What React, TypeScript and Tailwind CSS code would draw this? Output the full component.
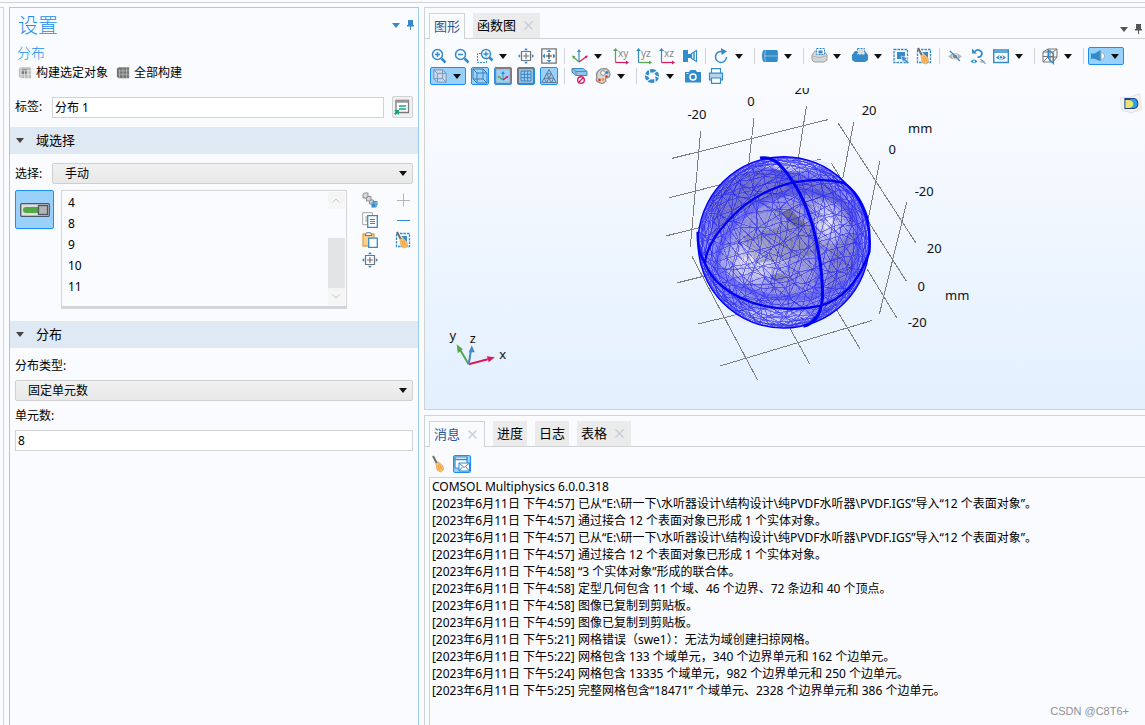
import { useState, type ReactNode } from "react";

const BLUE = "#338bca";
const RED = "#d81b60";
const GREEN = "#57a64a";
const GRAY = "#747474";

// ── Icons ───────────────────────────────────────────────────────────────

function Svg({ children, size = 16 }: { children: ReactNode; size?: number }) {
  return (
    <svg width={size} height={size} viewBox="0 0 16 16" fill="none" className="shrink-0 overflow-visible" aria-hidden="true">
      {children}
    </svg>
  );
}

function Caret({ color = "#111" }: { color?: string }) {
  return (
    <svg width="8" height="5" viewBox="0 0 8 5" className="shrink-0" aria-hidden="true">
      <path d="M0 0h8L4 5z" fill={color} />
    </svg>
  );
}

function Cross() {
  return (
    <svg width="9" height="9" viewBox="0 0 9 9" aria-hidden="true">
      <path d="M.5.5l8 8M8.500.5l-8 8" stroke="#c5ced8" strokeWidth="1.3" />
    </svg>
  );
}

function Pin({ color }: { color: string }) {
  return (
    <svg width="7" height="10" viewBox="0 0 7 10" className="shrink-0" aria-hidden="true">
      <path d="M1 0h5v5h1v1.500H4V10H3V6.500H0V5h1z" fill={color} />
    </svg>
  );
}

const Broom = () => (
  <>
    <path d="M2 0l4 7.500" stroke="#6d6d6d" strokeWidth="2" />
    <path d="M5 7.500l2.500-1.500 4.500 4 .5 4-3 2-3.500-2z" fill="#fbbf6b" stroke="#e8953b" strokeWidth=".6" />
    <path d="M7 9l1.500 5M8.500 8.500l2.500 5" stroke="#e8953b" strokeWidth=".8" />
  </>
);

const ICONS: Record<string, ReactNode> = {
  zoomIn: (
    <g stroke={BLUE}>
      <circle cx="6.500" cy="6.500" r="5" strokeWidth="1.500" />
      <path d="M4 6.500h5M6.500 4v5" strokeWidth="1.500" />
      <path d="M10.500 10.500l4 4" strokeWidth="2.500" />
    </g>
  ),
  zoomOut: (
    <g stroke={BLUE}>
      <circle cx="6.500" cy="6.500" r="5" strokeWidth="1.500" />
      <path d="M4 6.500h5" strokeWidth="1.500" />
      <path d="M10.500 10.500l4 4" strokeWidth="2.500" />
    </g>
  ),
  zoomBox: (
    <g stroke={BLUE}>
      <path d="M4 5.500H.5v9h9v-3" strokeDasharray="2 1" />
      <circle cx="9" cy="6" r="4.500" strokeWidth="1.500" />
      <path d="M6.500 6h5M9 3.500v5" strokeWidth="1.300" />
      <path d="M12.500 9.500l3 3" strokeWidth="2.500" />
    </g>
  ),
  extents: (
    <>
      <path d="M3.500 3.500h9v9h-9zM8 5v6M5 8h6" stroke={GRAY} strokeWidth="1.200" />
      <path d="M8 0l2 2.200H6zM8 16l2-2.200H6zM0 8l2.200-2v4zM16 8l-2.200-2v4z" fill={BLUE} />
    </>
  ),
  fit: (
    <>
      <path d="M.8.8h14.400v14.400H.8z" stroke={GRAY} strokeWidth="1.300" />
      <path d="M8 5v6M5 8h6" stroke="#444" strokeWidth="1.200" />
      <path d="M8 1.500l2.500 2.500h-5zM8 14.500L10.500 12h-5zM1.500 8L4 5.500v5zM14.500 8L12 5.500v5z" fill={BLUE} />
    </>
  ),
  axes: (
    <>
      <path d="M7 14V3" stroke={BLUE} strokeWidth="1.200" />
      <path d="M7 1l2 3H5z" fill={BLUE} />
      <path d="M7 14L1.500 9" stroke={GREEN} strokeWidth="1.200" />
      <path d="M0 7.500l3.500 1L1 11z" fill={GREEN} />
      <path d="M7 14l7-5" stroke={RED} strokeWidth="1.200" />
      <path d="M16 7.500l-3.500.5 2 2.500z" fill={RED} />
    </>
  ),
  camera: (
    <>
      <path d="M1 2h5v12H1zM6 6h3v4H6z" fill={BLUE} />
      <path d="M9.500 5.500L14.500 2.500v11L9.500 10.500z" fill="#fafbff" stroke={BLUE} strokeWidth="1.200" />
      <path d="M12 4.500v7" stroke={BLUE} strokeWidth="1.500" />
    </>
  ),
  rotate: (
    <>
      <path d="M9 3.500A5.500 5.500 0 1 0 13.500 9" stroke={BLUE} strokeWidth="1.500" />
      <path d="M8 0l6 3.500L8.500 7z" fill={BLUE} />
    </>
  ),
  cylinder: (
    <>
      <path d="M2 2h13q1 1 1 6t-1 6H2q-2-1-2-6t2-6z" fill={BLUE} />
      <path d="M3.500 2.500q-2 5.500 0 11M3 8h13" stroke="#a9cfea" strokeWidth=".8" />
    </>
  ),
  domain: (
    <>
      <path d="M1 7l3-4h9l3 4v5l-3 2H3l-2-2z" fill="#d5d5d5" stroke="#a0a0a0" />
      <path d="M1 8q7 3 14 0" stroke="#b5b5b5" />
      <path d="M5.500.5h8v6h-8z" fill="#fff" stroke={BLUE} strokeDasharray="2 1" />
      <path d="M7.500 2.500h4v3h-4z" fill={BLUE} />
    </>
  ),
  domainBlue: (
    <>
      <path d="M0 7l3-4h10l3 4v5l-3 2H3l-3-2z" fill={BLUE} />
      <path d="M5.500.5h7v6h-7z" fill="#dedede" stroke="#fff" />
      <path d="M5.500.5h7v6h-7z" stroke={BLUE} strokeDasharray="2 1" />
    </>
  ),
  select: (
    <>
      <path d="M1 1.500h13.500V14.500H1z" stroke={BLUE} strokeWidth="1.300" strokeDasharray="2.500 1" />
      <path d="M4 4h8v4l-4 3H4z" fill={BLUE} />
      <path d="M8 8l7 2-2.500 1L16 14.500 14.500 16 11 12.500 10 15z" fill={BLUE} stroke="#fff" strokeWidth=".5" />
    </>
  ),
  clearSelect: (
    <>
      <path d="M1.500 1.500h13v13h-13z" stroke={BLUE} strokeWidth="1.300" strokeDasharray="2.500 1" />
      <path d="M6 4h6v6z" fill={BLUE} />
      <Broom />
    </>
  ),
  hide: (
    <>
      <path d="M1 8.500q7-7 14 0-7 6-14 0z" fill="#b5b5b5" />
      <circle cx="8" cy="8.500" r="2.500" fill="#8c8c8c" stroke="#eee" />
      <path d="M3 3l10 10" stroke={BLUE} strokeWidth="1.300" />
    </>
  ),
  restore: (
    <>
      <path d="M5 3.500a3.800 3.500 0 1 1 2.500 5.500" stroke={BLUE} strokeWidth="1.700" />
      <path d="M2 .5v5h5z" fill={BLUE} />
      <path d="M.5 13.500q3.500-4 7 0-3.500 3.500-7 0z" fill={BLUE} />
      <circle cx="4" cy="13.500" r="1" fill="#fff" />
      <path d="M9.500 13.500q3-3 6 0-3 3-6 0z" fill="#c2c2c2" />
      <path d="M10.500 11l5 5" stroke={BLUE} />
    </>
  ),
  viewEye: (
    <>
      <path d="M.7 2h14.600v12.500H.7zM.7 4h14.600" stroke={BLUE} strokeWidth="1.400" />
      <path d="M3 9.500q5-5 10 0-5 4.500-10 0z" fill={BLUE} />
      <circle cx="8" cy="9.300" r="1.800" fill={BLUE} stroke="#fff" />
    </>
  ),
  clip: (
    <>
      <path d="M1 4l5-3h9v8l-4 5H1zM1 4h10v10M11 4l4-3M6 1v8l-5 5M6 9h9M1 8.500h10M8 2v12" stroke={GRAY} />
      <path d="M6.500 2l5 4v9.500l-5-5z" stroke={BLUE} strokeWidth="1.200" />
    </>
  ),
  horn: (
    <>
      <path d="M0 5h4l7-4v13l-7-3H0z" fill={BLUE} />
      <path d="M11.500 4a4 4 0 0 1 0 8z" fill="#fff" stroke="#8aa" />
    </>
  ),
  cube: (
    <>
      <path d="M1 1h10l4 4v10H5l-4-4z" fill="#c9d9ee" stroke="#6e8fb1" />
      <path d="M1 1l4 4h10M5 5v10M11 1v10H1M11 11l4 4" stroke="#6e8fb1" />
    </>
  ),
  wireCube: (
    <path d="M1 1h10v10H1zM5 5h10v10H5zM1 1l4 4M11 1l4 4M1 11l4 4M11 11l4 4" stroke="#3b7fb9" />
  ),
  orient: (
    <>
      <path d="M.5.5h15v15H.5z" stroke="#8b7f86" strokeWidth="1.500" />
      <path d="M8 12V5" stroke={BLUE} />
      <path d="M8 3l2 3H6z" fill={BLUE} />
      <path d="M8 12L4 9" stroke={GREEN} strokeWidth="1.500" />
      <path d="M2.500 8l3 .5-2 2z" fill={GREEN} />
      <path d="M8 12l4-3" stroke={RED} strokeWidth="1.500" />
      <path d="M13.500 8l-3 .5 2 2z" fill={RED} />
    </>
  ),
  grid: (
    <>
      <path d="M.5.5h15v15H.5z" stroke="#777" strokeWidth="1.300" />
      <path d="M3 3h10v10H3zM6.300 3v10M9.700 3v10M3 6.300h10M3 9.700h10" stroke="#3b7fb9" />
    </>
  ),
  mesh: (
    <path
      d="M8 1.500L.8 14.500h14.400zM5.600 5.800h4.800M3.200 10.200h9.600M5.600 5.800l4.800 8.700M10.400 5.800l-4.800 8.700M3.200 10.200l2.400 4.300M12.800 10.200l-2.400 4.300"
      stroke="#65798f"
    />
  ),
  noRender: (
    <>
      <path d="M0 .5h11l4 3v4H4L0 4z" fill="#8fc3ea" stroke={BLUE} />
      <path d="M0 .5l4 3h11M4 3.500v4" stroke={GRAY} strokeWidth=".8" />
      <circle cx="9" cy="12" r="3.300" fill="#fff" stroke={RED} strokeWidth="1.400" />
      <path d="M7 14l4-4" stroke={RED} strokeWidth="1.300" />
    </>
  ),
  palette: (
    <>
      <path d="M6 1q8-2 9 5 0 4-4 4-1 1 0 3-3 4-8 1-3-2-1-4-2-6 4-9z" fill="#d8d8d8" stroke="#888" strokeWidth="1.200" />
      <circle cx="8" cy="5" r="2.300" fill="#fff" stroke="#888" />
      <circle cx="12" cy="4.500" r="1.500" fill={BLUE} />
      <circle cx="4.500" cy="12" r="1.400" fill="#e5322d" />
      <circle cx="8" cy="11.500" r="1.400" fill="#f39a2e" />
      <circle cx="11.500" cy="8.500" r="1.300" fill="#e5322d" />
    </>
  ),
  aperture: (
    <>
      <circle cx="8" cy="8" r="5.300" stroke={BLUE} strokeWidth="3.600" />
      <path d="M5 0l1 6M14 2.500L9 5.500M16 10l-5-2.500M11 16v-6M2 13.500l5-3M0 6l5 2.500" stroke="#fafbff" strokeWidth="1.300" />
    </>
  ),
  photo: (
    <>
      <path d="M0 4h4l1.500-2h5L12 4h4v10.500H0z" fill={BLUE} />
      <circle cx="8" cy="9" r="3" stroke="#fff" strokeWidth="1.500" />
      <path d="M1.500 5.500h2" stroke="#fff" />
    </>
  ),
  print: (
    <>
      <path d="M1.500 5h13v7h-13z" fill="#b9d4ea" stroke={BLUE} strokeWidth="1.200" />
      <path d="M3.500.7h9V5h-9zM3.500 10h9v5.300h-9z" fill="#fff" stroke={BLUE} strokeWidth="1.200" />
    </>
  ),
  broom: <Broom />,
  mail: (
    <>
      <path d="M1 1h12v11H1z" fill="#fff" stroke={BLUE} strokeWidth="1.200" />
      <path d="M1 3.500h12" stroke={BLUE} strokeWidth="1.500" />
      <path d="M5 7h10.500v8H5z" fill="#fff" stroke={BLUE} />
      <path d="M5 7l5.200 4.500L15.500 7M5 15l3.500-4M15.500 15L12 11" stroke={BLUE} />
    </>
  ),
  // settings panel
  buildSel: (
    <>
      <path d="M1 3l2-1.500h11l1 1.500v11H3l-2-2z" fill="#bdbdbd" />
      <path d="M4 4h6v6H4z" fill="#777" />
      <path d="M3.500 2v12M7.500 5v9M11.500 5v9M3 5.500h12M3 9.500h12" stroke="#f0f0f0" strokeWidth=".8" />
    </>
  ),
  buildAll: (
    <>
      <path d="M1 3l2-1.500h12V14H3l-2-2z" fill="#777" />
      <path d="M4 4v10M8 2v12M12 2v12M3 5.500h12M3 9.500h12" stroke="#c9c9c9" strokeWidth=".7" />
    </>
  ),
  goto: (
    <>
      <path d="M2 1.500h12.500v12H2z" fill="#fff" stroke="#7a7a7a" strokeWidth="1.300" />
      <path d="M2 2.500h12.500" stroke="#999" strokeWidth="2.500" />
      <path d="M5 7h7M5 10h7" stroke="#15a67f" strokeWidth="1.300" />
      <path d="M0 11h5v5l-1.500-1.500L1.500 16 0 14.500l1.800-1.800z" fill="#15a67f" />
    </>
  ),
  chain: (
    <>
      <g fill="#d9d9d9" stroke="#8d8d8d">
        <path d="M1 2l1.500-1H6v3.500L4.500 6H1zM4.500 5.500L6 4.500h3V8L7.500 9h-3zM7.500 9L9 8h2.500v3l-1 1h-3z" />
      </g>
      <path d="M9.500 10.500l2-1.500h4v4L14 15.500H9.500z" fill={BLUE} />
      <path d="M10 11h4v4M14 11l1.500-1.500" stroke="#9fd0f3" strokeWidth=".8" />
    </>
  ),
  copy: (
    <>
      <path d="M.7.7h9.600v12H.7z" fill="#fff" stroke="#a2a2a2" />
      <path d="M3 5h3M3 7h3M3 9h3" stroke="#a2a2a2" />
      <path d="M5.700 3.700h9.600v11.600H5.700z" fill="#fff" stroke={BLUE} strokeWidth="1.300" />
      <path d="M8 7.500h5M8 9.500h5M8 11.500h5" stroke={BLUE} />
    </>
  ),
  paste: (
    <>
      <path d="M1 2h11v12H1z" fill="#fcd08f" stroke="#eea343" strokeWidth="1.300" />
      <path d="M3 3.500L4.500.7h4L10 3.500z" fill="#fff" stroke={GRAY} />
      <path d="M6.700 6.200h8.600v9.100H6.700z" fill="#fff" stroke={BLUE} strokeWidth="1.300" />
    </>
  ),
  plus: <path d="M8.500 1.500v13M2 8.500h13" stroke="#b3b8bd" />,
  minus: <path d="M2 8.500h13" stroke={BLUE} />,
};

function PlaneIcon({ label, axis, side }: { label: string; axis: string; side: string }) {
  return (
    <Svg>
      <path d="M2.500 14.500V2" stroke={side} strokeWidth="1.200" />
      <path d="M2.500 0L5 3H0z" fill={side} />
      <path d="M2.500 14.500h11" stroke={axis} strokeWidth="1.300" />
      <path d="M16 14.500l-3-2v4z" fill={axis} />
      <text x="5" y="9" fontSize="10" fill="#888">{label}</text>
    </Svg>
  );
}

// ── Toolbar pieces ──────────────────────────────────────────────────────

function Tool({ icon, label, on }: { icon: ReactNode; label: string; on?: boolean }) {
  return (
    <span className="flex h-5 w-[23px] shrink-0 items-center justify-center">
      <button
        aria-label={label}
        className={`flex h-[18px] w-[18px] items-center justify-center ${
          on ? "rounded-xs border border-[#1b8ff2] bg-[#9ad1fb]" : ""
        }`}
      >
        {icon}
      </button>
    </span>
  );
}

function Drop({ label }: { label: string }) {
  return (
    <button aria-label={label} className="flex h-5 w-[18px] shrink-0 items-center pl-[2px]">
      <Caret />
    </button>
  );
}

function Sep() {
  return (
    <span className="flex h-4 w-2 shrink-0 pl-[3px]">
      <span className="w-px bg-[#d0d3d6]" />
    </span>
  );
}

function SplitTool({ icon, label }: { icon: ReactNode; label: string }) {
  return (
    <button
      aria-label={label}
      className="flex h-[18px] w-9 shrink-0 items-center justify-between rounded-xs border border-[#1b8ff2] bg-[#9ad1fb] pl-[2px] pr-1"
    >
      {icon}
      <Caret />
    </button>
  );
}

type Item = { k: "tool" | "drop" | "sep"; icon?: string; label?: string; on?: boolean };

const ROW_ONE: Item[] = [
  { k: "tool", icon: "zoomIn", label: "放大" },
  { k: "tool", icon: "zoomOut", label: "缩小" },
  { k: "tool", icon: "zoomBox", label: "框选缩放" },
  { k: "drop", label: "缩放选项" },
  { k: "tool", icon: "extents", label: "缩放到选择" },
  { k: "tool", icon: "fit", label: "缩放到范围" },
  { k: "sep" },
  { k: "tool", icon: "axes", label: "默认视图" },
  { k: "drop", label: "视图选项" },
  { k: "tool", icon: "xy", label: "xy 视图" },
  { k: "tool", icon: "yz", label: "yz 视图" },
  { k: "tool", icon: "xz", label: "xz 视图" },
  { k: "tool", icon: "camera", label: "相机" },
  { k: "sep" },
  { k: "tool", icon: "rotate", label: "旋转" },
  { k: "drop", label: "旋转选项" },
  { k: "sep" },
  { k: "tool", icon: "cylinder", label: "选择实体" },
  { k: "drop", label: "实体选项" },
  { k: "sep" },
  { k: "tool", icon: "domain", label: "选择域" },
  { k: "drop", label: "域选项" },
  { k: "tool", icon: "domainBlue", label: "选择边界" },
  { k: "drop", label: "边界选项" },
  { k: "tool", icon: "select", label: "框选" },
  { k: "tool", icon: "clearSelect", label: "清除选择" },
  { k: "sep" },
  { k: "tool", icon: "hide", label: "隐藏" },
  { k: "tool", icon: "restore", label: "重置隐藏" },
  { k: "tool", icon: "viewEye", label: "查看" },
  { k: "drop", label: "查看选项" },
  { k: "sep" },
  { k: "tool", icon: "clip", label: "裁剪" },
  { k: "drop", label: "裁剪选项" },
  { k: "sep" },
];

const ROW_TWO: Item[] = [
  { k: "tool", icon: "wireCube", label: "线框", on: true },
  { k: "tool", icon: "orient", label: "坐标轴方向", on: true },
  { k: "tool", icon: "grid", label: "网格", on: true },
  { k: "tool", icon: "mesh", label: "网格渲染", on: true },
  { k: "sep" },
  { k: "tool", icon: "noRender", label: "禁用渲染" },
  { k: "tool", icon: "palette", label: "颜色" },
  { k: "drop", label: "颜色选项" },
  { k: "sep" },
  { k: "tool", icon: "aperture", label: "环境" },
  { k: "drop", label: "环境选项" },
  { k: "tool", icon: "photo", label: "图像快照" },
  { k: "tool", icon: "print", label: "打印" },
];

function iconFor(name: string) {
  if (name === "xy") return <PlaneIcon label="xy" axis={RED} side={GREEN} />;
  if (name === "yz") return <PlaneIcon label="yz" axis={GREEN} side={BLUE} />;
  if (name === "xz") return <PlaneIcon label="xz" axis={RED} side={BLUE} />;
  return <Svg>{ICONS[name]}</Svg>;
}

function Tools({ items }: { items: Item[] }) {
  return (
    <>
      {items.map((it, i) => {
        if (it.k === "sep") return <Sep key={i} />;
        if (it.k === "drop") return <Drop key={i} label={it.label!} />;
        return <Tool key={i} icon={iconFor(it.icon!)} label={it.label!} on={it.on} />;
      })}
    </>
  );
}

// ── Mesh ────────────────────────────────────────────────────────────────

type V3 = [number, number, number];

function norm([x, y, z]: V3): V3 {
  const l = Math.hypot(x, y, z);
  return [x / l, y / l, z / l];
}

// Subdivided icosahedron, projected to 2D and split in front and back edges
function sphereEdges(levels: number, r: number, cx: number, cy: number, seed: number) {
  const t = (1 + Math.sqrt(5)) / 2;
  const verts: V3[] = (
    [
      [-1, t, 0], [1, t, 0], [-1, -t, 0], [1, -t, 0],
      [0, -1, t], [0, 1, t], [0, -1, -t], [0, 1, -t],
      [t, 0, -1], [t, 0, 1], [-t, 0, -1], [-t, 0, 1],
    ] as V3[]
  ).map(norm);
  let faces = [
    [0, 11, 5], [0, 5, 1], [0, 1, 7], [0, 7, 10], [0, 10, 11],
    [1, 5, 9], [5, 11, 4], [11, 10, 2], [10, 7, 6], [7, 1, 8],
    [3, 9, 4], [3, 4, 2], [3, 2, 6], [3, 6, 8], [3, 8, 9],
    [4, 9, 5], [2, 4, 11], [6, 2, 10], [8, 6, 7], [9, 8, 1],
  ];
  for (let l = 0; l < levels; l++) {
    const cache: Record<string, number> = {};
    const mid = (a: number, b: number) => {
      const key = a < b ? `${a}_${b}` : `${b}_${a}`;
      if (cache[key] === undefined) {
        const [p, q] = [verts[a], verts[b]];
        verts.push(norm([p[0] + q[0], p[1] + q[1], p[2] + q[2]]));
        cache[key] = verts.length - 1;
      }
      return cache[key];
    };
    faces = faces.flatMap(([a, b, c]) => {
      const [ab, bc, ca] = [mid(a, b), mid(b, c), mid(c, a)];
      return [[a, ab, ca], [b, bc, ab], [c, ca, bc], [ab, bc, ca]];
    });
  }

  let s = seed;
  const rand = () => {
    s = (s * 16807) % 2147483647;
    return s / 2147483647 - 0.5;
  };
  const jitter = 0.28 / 2 ** (levels - 1);
  const pts = verts.map((v) => {
    const [x, y, z] = norm([v[0] + rand() * jitter, v[1] + rand() * jitter, v[2] + rand() * jitter]);
    const a = seed * 0.7;
    const x1 = x * Math.cos(a) - z * Math.sin(a);
    const z1 = x * Math.sin(a) + z * Math.cos(a);
    const y1 = y * Math.cos(0.5) - z1 * Math.sin(0.5);
    const z2 = y * Math.sin(0.5) + z1 * Math.cos(0.5);
    return [cx + x1 * r, cy + y1 * r, z2];
  });

  let front = "";
  let back = "";
  const seen = new Set<string>();
  faces.forEach(([a, b, c]) => {
    [[a, b], [b, c], [c, a]].forEach(([p, q]) => {
      const key = p < q ? `${p}_${q}` : `${q}_${p}`;
      if (seen.has(key)) return;
      seen.add(key);
      const [m, n] = [pts[p], pts[q]];
      const d = `M${m[0].toFixed(1)} ${m[1].toFixed(1)}L${n[0].toFixed(1)} ${n[1].toFixed(1)}`;
      if (m[2] + n[2] > 0) front += d;
      else back += d;
    });
  });
  return { front, back };
}

const FINE = sphereEdges(3, 256, 401, 472, 3);
const COARSE = sphereEdges(2, 250, 401, 472, 5);

const GRID_LINES =
  "M66 220L533 104M58 338L512 222M49 452L180 420M82 593L170 571M145 716L300 679M211 842L665 706" +
  "M152 138L121 486M312 99L296 240M469 64L440 250M611 111L578 280M689 228L655 400M770 351L688 686" +
  "M564 114L797 473M544 235L768 587M650 550L740 698M126 514L323 885M420 730L479 836M560 675L630 791";

const AXIS_LABELS: [number, number, string][] = [
  [697, 119, "-20"], [751, 106, "0"], [802, 94, "20"], [869, 115, "20"],
  [920, 133, "mm"], [892, 154, "0"], [924, 196, "-20"], [934, 253, "20"],
  [921, 291, "0"], [957, 300, "mm"], [917, 327, "-20"],
];

function Scene() {
  return (
    <svg viewBox="425 88 720 321" preserveAspectRatio="xMidYMid slice" className="block h-full w-full" role="img" aria-label="mesh">
      <defs>
        <radialGradient id="glow">
          <stop offset="0" stopColor="#fff" stopOpacity=".85" />
          <stop offset="1" stopColor="#fff" stopOpacity="0" />
        </radialGradient>
        <radialGradient id="ball">
          <stop offset="0" stopColor="#9d9ccf" />
          <stop offset=".6" stopColor="#8c8ade" />
          <stop offset=".85" stopColor="#8080f5" />
          <stop offset="1" stopColor="#9a9cff" />
        </radialGradient>
      </defs>

      <g transform="translate(650 85) scale(.3333)" fill="none">
        <path d={GRID_LINES} stroke="#7d7d7d" strokeWidth="3" shapeRendering="crispEdges" />

        <circle cx="401" cy="472" r="257" fill="url(#ball)" opacity=".9" />
        <path d="M180 340Q250 250 360 250Q560 270 620 400L600 420Q540 330 440 330Q280 340 190 460z" fill="#5a58a8" opacity=".45" />
        <path d="M540 480L620 440Q630 540 570 600L530 620z" fill="#7776b0" opacity=".5" />
        <ellipse cx="310" cy="530" rx="120" ry="90" fill="url(#glow)" />
        <ellipse cx="535" cy="410" rx="70" ry="85" fill="url(#glow)" />
        <ellipse cx="440" cy="240" rx="100" ry="18" fill="#e4e5ff" opacity=".7" />
        <ellipse cx="370" cy="695" rx="120" ry="22" fill="#e4e5ff" opacity=".6" />
        <path d="M275 455L390 425L460 400L530 490L480 510L320 535z" fill="#777797" opacity=".4" />
        <path d="M395 385l25-14 30 30 12 20-30 2z" fill="#55556f" opacity=".6" />
        <ellipse cx="384" cy="577" rx="22" ry="12" fill="#77778f" opacity=".7" />

        <path d={COARSE.back} stroke="#3a3a90" strokeWidth="2" opacity=".35" />
        <g shapeRendering="crispEdges" strokeWidth="3">
          <path d={FINE.back} stroke="#2a2af5" opacity=".16" />
          <path d={COARSE.front} stroke="#1a1ae0" opacity=".45" />
          <path d={FINE.front} stroke="#1515ff" opacity=".5" />
        </g>

        {/* inner shell edges */}
        <g stroke="#3a3aff" strokeWidth="18" opacity=".38">
          <path d="M205 560Q190 480 270 400Q370 320 460 318Q560 320 610 400" />
          <path d="M195 545Q250 610 360 635Q500 650 590 590" />
          <path d="M360 250Q440 300 480 400Q515 520 500 640" />
          <path d="M605 350Q650 470 600 590" />
        </g>

        {/* outer shell edges */}
        <g stroke="#0000f5">
          <circle cx="401" cy="472" r="257" strokeWidth="4" />
          <path d="M143 440Q142 500 165 535Q195 610 300 650Q400 685 510 662Q610 635 658 500" strokeWidth="7" />
          <path d="M165 535Q168 480 230 412Q310 320 430 292Q510 276 580 293Q630 325 652 400Q662 450 658 500" strokeWidth="7" />
          <path d="M330 219Q365 212 395 245Q460 320 490 430Q520 550 517 640Q510 712 460 723" strokeWidth="9" />
        </g>
      </g>

      <g fontFamily='"Noto Sans", sans-serif' fontSize="13" fill="#111" textAnchor="middle">
        {AXIS_LABELS.map(([x, y, t]) => (
          <text key={`${x}-${y}`} x={x} y={y}>{t}</text>
        ))}
        <text x="453" y="340">y</text>
        <text x="473" y="343">z</text>
        <text x="503" y="359">x</text>
      </g>

      <g strokeWidth="2">
        <path d="M469 364L460 349" stroke={GREEN} />
        <path d="M457 344l6 5-5 4z" fill={GREEN} />
        <path d="M469 364l19-5" stroke={RED} />
        <path d="M495 357l-8-1 2 6z" fill={RED} />
        <path d="M469 364l2-13" stroke="#4a86c0" />
        <path d="M472 345l3 7h-6z" fill="#4a86c0" />
      </g>

      <path d="M1120 98l10-1 9-3 2 15-10 4-9-3z" fill="#f6f4f2" stroke="#e4e1de" />
      <path d="M1124 98h10q4 1 4 6 0 4-4 5h-10z" fill="#1c3f9a" />
      <path d="M1130 99h4q3 1 3 5 0 3-3 4h-4z" fill="#2f9fe0" />
      <path d="M1125 100h4q4 1 4 4t-4 4h-4z" fill="#e9e46a" />
    </svg>
  );
}

// ── Settings ────────────────────────────────────────────────────────────

function SectionHead({ title }: { title: string }) {
  return (
    <button className="flex h-[27px] w-full items-center gap-3 bg-[#dfe9f4] pl-[6px] text-left text-[13px]">
      <Caret color="#444" />
      <span>{title}</span>
    </button>
  );
}

function Dropdown({ id, value }: { id: string; value: string }) {
  return (
    <div className="relative flex-1">
      <select
        id={id}
        className="block h-[21px] w-full appearance-none rounded-xs border border-[#d0d0d0] bg-linear-to-b from-[#f1f1f2] to-[#e8e8e8] pl-3 text-xs"
      >
        <option>{value}</option>
      </select>
      <span className="pointer-events-none absolute right-[6px] top-2">
        <Caret />
      </span>
    </div>
  );
}

function Settings() {
  const [name, setName] = useState("分布 1");
  const [count, setCount] = useState("8");

  return (
    <section className="min-w-0 flex-[409_1_0%] border border-b-0 border-[#9ccbf5]">
      <div className="flex items-start pl-2 pr-1 pt-1">
        <h1 className="flex-1 text-xl font-light leading-7 text-[#1b8ff0]">设置</h1>
        <div className="flex items-center gap-[7px] pt-2">
          <Caret color={BLUE} />
          <Pin color={BLUE} />
        </div>
      </div>
      <h2 className="pl-[7px] text-sm font-light leading-[26px] text-[#1b8ff0]">分布</h2>

      <div className="flex h-[14px] items-center gap-2 pl-2 text-xs">
        <button className="flex items-center gap-1">
          <Svg size={14}>{ICONS.buildSel}</Svg>构建选定对象
        </button>
        <button className="flex items-center gap-1">
          <Svg size={14}>{ICONS.buildAll}</Svg>全部构建
        </button>
      </div>

      <div className="mt-4 flex items-center px-[5px]">
        <label htmlFor="name" className="w-[37px] text-xs">标签:</label>
        <input
          id="name"
          value={name}
          onChange={(e) => setName(e.target.value)}
          className="h-[21px] min-w-0 flex-1 border border-[#d0d3d6] bg-white px-[2px] text-xs"
        />
        <button aria-label="转到源" className="ml-2 flex h-[22px] w-[21px] items-center justify-center rounded-xs border border-[#d0d0d0] bg-[#f0f0f0]">
          {iconFor("goto")}
        </button>
      </div>

      <div className="mt-[9px]">
        <SectionHead title="域选择" />
      </div>
      <div className="mt-[9px] flex items-center px-[5px]">
        <label htmlFor="pick" className="w-[37px] text-xs">选择:</label>
        <Dropdown id="pick" value="手动" />
      </div>

      <div className="mt-[6px] flex px-[5px]">
        <button
          aria-label="激活选择"
          className="flex h-[39px] w-[39px] shrink-0 items-center justify-center rounded-xs border border-[#1b8ff2] bg-[#9ad1fb]"
        >
          <svg width="30" height="14" viewBox="0 0 30 14" aria-hidden="true">
            <rect x=".7" y=".7" width="28.600" height="12.600" rx="1" fill="#dedede" stroke="#4c5866" strokeWidth="1.300" />
            <rect x="3" y="4" width="17" height="6" rx="3" fill="#53a845" />
            <rect x="18.500" y="2.500" width="9" height="9" fill="#b3b3b3" stroke="#4c5866" strokeWidth="1.300" />
          </svg>
        </button>
        <div className="ml-[7px] flex h-[119px] min-w-0 flex-1 border border-b-[3px] border-[#d3d5d7]">
          <ul role="listbox" aria-label="域" className="flex-1 pl-[6px] pt-px text-xs">
            {["4", "8", "9", "10", "11"].map((n) => (
              <li key={n} role="option" aria-selected="false" className="h-[21px] leading-[21px]">{n}</li>
            ))}
          </ul>
          <div className="my-px mr-px flex w-[17px] flex-col items-center bg-[#f5f5f6]">
            <span className="flex h-[17px] items-center">
              <svg width="8" height="5" viewBox="0 0 8 5" fill="none"><path d="M.5 4.500L4 1l3.500 3.500" stroke="#c3c5c8" /></svg>
            </span>
            <span className="w-full flex-1 bg-[#fafbff]" />
            <span className="h-[50px] w-full bg-[#e3e4e6]" />
            <span className="flex h-[17px] items-center">
              <svg width="8" height="5" viewBox="0 0 8 5" fill="none"><path d="M.5.5L4 4 7.500.5" stroke="#c3c5c8" /></svg>
            </span>
          </div>
        </div>
        <div className="ml-[15px] grid w-[51px] grid-cols-[33px_16px] content-start gap-y-1 pt-[2px]">
          <button aria-label="创建选择" className="h-4 w-4">{iconFor("chain")}</button>
          <button aria-label="添加" className="h-4 w-4">{iconFor("plus")}</button>
          <button aria-label="复制" className="h-4 w-4">{iconFor("copy")}</button>
          <button aria-label="移除" className="h-4 w-4">{iconFor("minus")}</button>
          <button aria-label="粘贴" className="h-4 w-4">{iconFor("paste")}</button>
          <button aria-label="清除" className="h-4 w-4">{iconFor("clearSelect")}</button>
          <button aria-label="缩放到选择" className="h-4 w-4">{iconFor("extents")}</button>
        </div>
      </div>

      <div className="mt-3">
        <SectionHead title="分布" />
      </div>
      <div className="flex flex-col px-[5px] pt-2 text-xs">
        <label htmlFor="kind" className="h-6 leading-5">分布类型:</label>
        <div className="flex">
          <Dropdown id="kind" value="固定单元数" />
        </div>
        <label htmlFor="count" className="mt-[5px] h-6 leading-5">单元数:</label>
        <input
          id="count"
          value={count}
          onChange={(e) => setCount(e.target.value)}
          className="h-[21px] border border-[#d0d3d6] bg-white px-[2px]"
        />
      </div>
    </section>
  );
}

// ── Messages ────────────────────────────────────────────────────────────

const LOG = [
  "COMSOL Multiphysics 6.0.0.318",
  "[2023年6月11日 下午4:57] 已从“E:\\研一下\\水听器设计\\结构设计\\纯PVDF水听器\\PVDF.IGS”导入“12 个表面对象”。",
  "[2023年6月11日 下午4:57] 通过接合 12 个表面对象已形成 1 个实体对象。",
  "[2023年6月11日 下午4:57] 已从“E:\\研一下\\水听器设计\\结构设计\\纯PVDF水听器\\PVDF.IGS”导入“12 个表面对象”。",
  "[2023年6月11日 下午4:57] 通过接合 12 个表面对象已形成 1 个实体对象。",
  "[2023年6月11日 下午4:58] “3 个实体对象”形成的联合体。",
  "[2023年6月11日 下午4:58] 定型几何包含 11 个域、46 个边界、72 条边和 40 个顶点。",
  "[2023年6月11日 下午4:58] 图像已复制到剪贴板。",
  "[2023年6月11日 下午4:59] 图像已复制到剪贴板。",
  "[2023年6月11日 下午5:21] 网格错误（swe1）：无法为域创建扫掠网格。",
  "[2023年6月11日 下午5:22] 网格包含 133 个域单元，340 个边界单元和 162 个边单元。",
  "[2023年6月11日 下午5:24] 网格包含 13335 个域单元，982 个边界单元和 250 个边单元。",
  "[2023年6月11日 下午5:25] 完整网格包含“18471” 个域单元、2328 个边界单元和 386 个边单元。",
];

function TabItem({ title, active, closable }: { title: string; active?: boolean; closable?: boolean }) {
  return (
    <button
      role="tab"
      aria-selected={!!active}
      className={`flex items-center gap-2 whitespace-nowrap text-[13px] ${closable ? "pl-1 pr-[7px]" : "px-1"} ${
        active ? "h-[26px] border border-b-0 border-[#d0d3d6] bg-[#fafbff] text-[#2b579a]" : "h-[25px] bg-[#ebebeb]"
      }`}
    >
      {title}
      {closable && <Cross />}
    </button>
  );
}

export default function App() {
  return (
    <div
      lang="zh-CN"
      className='flex h-screen min-h-[600px] flex-col overflow-hidden bg-[#fafbff] pt-[2px] font-["Noto_Sans","Noto_Sans_CJK_SC",sans-serif] text-black'
    >
      <div className="mb-1 h-px shrink-0 bg-[#d0d3d6]" />
      <div className="flex min-h-0 flex-1">
        <div className="mr-[5px] w-1 shrink-0 border-r border-t border-[#d0d3d6]" />
        <Settings />

        <div className="ml-[5px] flex min-w-0 flex-[723_1_0%] flex-col gap-[5px]">
          {/* Graphics */}
          <section className="flex min-h-0 flex-[403_1_0%] flex-col border border-r-0 border-[#d0d3d6]">
            <div className="flex h-[31px] shrink-0 items-end border-b border-[#d0d3d6] pl-1">
              <div role="tablist" className="-mb-px flex items-start gap-2">
                <TabItem title="图形" active />
                <TabItem title="函数图" closable />
              </div>
              <div className="mb-1 ml-auto flex items-center gap-[7px] pr-[3px]">
                <Caret color="#555" />
                <Pin color="#555" />
              </div>
            </div>
            <div className="shrink-0 overflow-hidden pb-[2px] pl-[3px] pt-[7px]">
              <div className="flex items-center">
                <Tools items={ROW_ONE} />
                <SplitTool icon={<Svg size={14}>{ICONS.horn}</Svg>} label="声音" />
              </div>
              <div className="flex items-center">
                <span className="flex w-[41px] shrink-0 justify-center">
                  <SplitTool icon={<Svg size={14}>{ICONS.cube}</Svg>} label="透明度" />
                </span>
                <Tools items={ROW_TWO} />
              </div>
            </div>
            <div className="min-h-0 flex-1 bg-linear-to-b from-[#fafbff] to-[#e2f0fe]">
              <Scene />
            </div>
          </section>

          {/* Messages */}
          <section className="flex min-h-0 flex-[310_1_0%] flex-col border border-b-0 border-r-0 border-[#d0d3d6]">
            <div role="tablist" className="flex h-[31px] shrink-0 items-end border-b border-[#d0d3d6] pl-1">
              <div className="-mb-px flex items-start gap-2">
                <TabItem title="消息" active closable />
                <TabItem title="进度" />
                <TabItem title="日志" />
                <TabItem title="表格" closable />
              </div>
            </div>
            <div className="flex h-[30px] shrink-0 items-center pl-[3px] pt-1">
              <Tool icon={iconFor("broom")} label="清除" />
              <Tool icon={iconFor("mail")} label="滚动" on />
            </div>
            <div className="relative ml-1 min-h-0 flex-1 overflow-hidden border-l border-t border-[#d0d3d6] pl-[2px] text-xs">
              {LOG.map((line, i) => (
                <p key={i} className="h-[17px] whitespace-nowrap leading-[17px]">{line}</p>
              ))}
              <span className='absolute bottom-[6px] right-4 font-["Liberation_Sans",sans-serif] text-[11px] text-[#8f9196]'>
                CSDN @C8T6+
              </span>
            </div>
          </section>
        </div>
      </div>
    </div>
  );
}
